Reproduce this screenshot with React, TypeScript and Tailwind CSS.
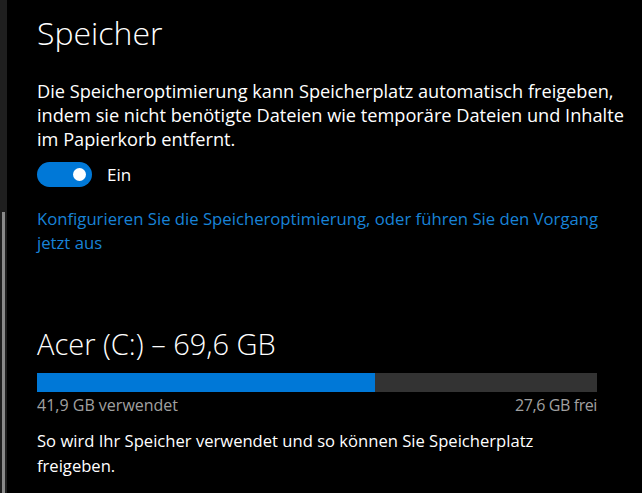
export default function App() {
  return (
    <div className="flex h-[493px] w-[642px] overflow-hidden bg-black font-['Open_Sans',sans-serif] text-white">
      <div className="flex w-[7px] shrink-0 flex-col bg-[#1f1f1f]">
        <div className="h-[212px]" />
        <div className="ml-[2px] w-[3px] flex-1 bg-[#8a8a8a]" />
      </div>
      <div className="flex w-[600px] flex-col pl-[30px]">
        <h1 className="mt-[13px] text-[32px] font-light leading-[40px]">Speicher</h1>
        <p className="mt-[26px] w-[590px] text-[18.2px] leading-[24px]">
          Die Speicheroptimierung kann Speicherplatz automatisch freigeben, indem sie nicht benötigte Dateien wie
          temporäre Dateien und Inhalte im Papierkorb entfernt.
        </p>
        <div className="mt-[11px] flex items-center">
          <div className="flex h-[25px] w-[55px] items-center justify-end rounded-full bg-[#0078d7] pr-[6px]">
            <div className="h-[13px] w-[13px] rounded-full bg-white" />
          </div>
          <span className="ml-[15px] text-[17px] leading-[24px]">Ein</span>
        </div>
        <a className="mt-[20px] w-[570px] text-[16.7px] leading-[24px] text-[#1883d7]">
          Konfigurieren Sie die Speicheroptimierung, oder führen Sie den Vorgang jetzt aus
        </a>
        <h2 className="mt-[71px] text-[29px] font-light leading-[36px]">Acer (C:) – 69,6 GB</h2>
        <div className="mt-[11px] flex h-[19px] w-[560px] bg-[#333333]">
          <div className="h-full w-[338px] bg-[#0078d7]" />
        </div>
        <div className="mt-[1px] flex w-[560px] justify-between text-[16px] leading-[24px] text-[#a0a0a0]">
          <span>41,9 GB verwendet</span>
          <span className="tracking-[-0.4px]">27,6 GB frei</span>
        </div>
        <p className="mt-[11px] w-[540px] text-[16.6px] leading-[25px]">
          So wird Ihr Speicher verwendet und so können Sie Speicherplatz freigeben.
        </p>
      </div>
    </div>
  );
}
